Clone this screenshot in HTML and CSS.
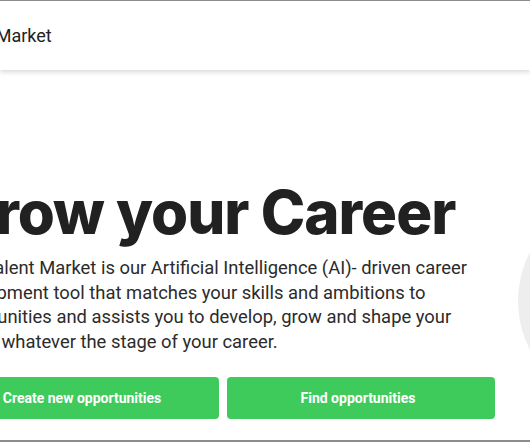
FILE: index.html
```html
<!DOCTYPE html>
<html>
<head>
  <title>Talent Market</title>
  <link rel="stylesheet" href="styles.css">
</head>
<body>
  <div class="page">
    <!-- 상단 헤더 -->
    <div class="header">
      <span class="brand">Talent Market</span>
    </div>

    <!-- 히어로 영역 -->
    <div class="hero">
      <h1>Grow your Career</h1>
      <p class="intro">Our Talent Market is our Artificial Intelligence (AI)- driven career development tool that matches your skills and ambitions to opportunities and assists you to develop, grow and shape your career, whatever the stage of your career.</p>
      <div class="actions">
        <button class="btn">Create new opportunities</button>
        <button class="btn">Find opportunities</button>
      </div>
    </div>

    <div class="blob"></div>
  </div>
</body>
</html>
```

FILE: styles.css
```css
/* 스타일링 */
html, body {
  margin: 0;
  padding: 0;
  background: #ffffff;
}

.page {
  position: relative;
  width: 530px;
  height: 442px;
  box-sizing: border-box;
  border-top: 1px solid #8c8c8c;
  border-bottom: 2px solid #8c8c8c;
  overflow: hidden;
  font-family: Roboto, "Liberation Sans", sans-serif;
}

.header {
  position: relative;
  z-index: 1;
  height: 69px;
  display: flex;
  align-items: center;
  background: #ffffff;
  box-shadow: 0 2px 5px rgba(0, 0, 0, 0.16);
}

.brand {
  margin-left: -58px;
  font-size: 18px;
  color: #222222;
}

.hero {
  position: relative;
  z-index: 1;
  margin-left: -49px;
  width: 545px;
  padding-top: 106px;
}

h1 {
  margin: 0;
  font-family: Inter, "Liberation Sans", sans-serif;
  font-weight: 800;
  font-size: 60px;
  line-height: 72px;
  letter-spacing: -1px;
  color: #212121;
}

.intro {
  margin: 8px 0 0 -8px;
  width: 538px;
  text-indent: 8px;
  font-size: 18.4px;
  line-height: 24.7px;
  color: #2b2b2b;
}

.actions {
  display: flex;
  gap: 8px;
  margin-top: 22px;
}

.btn {
  width: 268px;
  height: 42px;
  border: none;
  border-radius: 4px;
  background-color: #3fcb5b;
  color: #ffffff;
  font-family: Roboto, "Liberation Sans", sans-serif;
  font-weight: 700;
  font-size: 14px;
  padding: 0 6px 0 0;
  cursor: pointer;
}

.blob {
  position: absolute;
  left: 518px;
  top: 200px;
  width: 190px;
  height: 200px;
  border-radius: 50%;
  background: #eeeeee;
}
```
